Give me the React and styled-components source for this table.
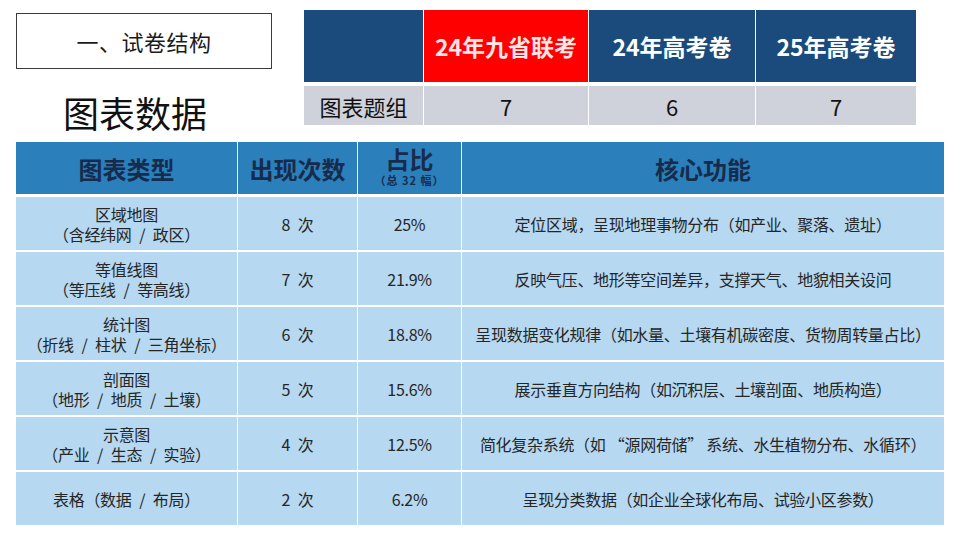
import React from 'react';
import styled, { createGlobalStyle } from 'styled-components';

const FONT = `"Noto Sans CJK SC", "Noto Sans", sans-serif`;

const summary = {
	columns: ['24年九省联考', '24年高考卷', '25年高考卷'],
	label: '图表题组',
	values: ['7', '6', '7'],
};

// \u2002 keeps the wide gaps round the slashes seen in the slide
const S = '\u2002/\u2002';

const rows = [
	{ type: ['区域地图', `（含经纬网${S}政区）`], count: '8\u2002次', ratio: '25%', use: '定位区域，呈现地理事物分布（如产业、聚落、遗址）' },
	{ type: ['等值线图', `（等压线${S}等高线）`], count: '7\u2002次', ratio: '21.9%', use: '反映气压、地形等空间差异，支撑天气、地貌相关设问' },
	{ type: ['统计图', `（折线${S}柱状${S}三角坐标）`], count: '6\u2002次', ratio: '18.8%', use: '呈现数据变化规律（如水量、土壤有机碳密度、货物周转量占比）' },
	{ type: ['剖面图', `（地形${S}地质${S}土壤）`], count: '5\u2002次', ratio: '15.6%', use: '展示垂直方向结构（如沉积层、土壤剖面、地质构造）' },
	{ type: ['示意图', `（产业${S}生态${S}实验）`], count: '4\u2002次', ratio: '12.5%', use: '简化复杂系统（如 “源网荷储” 系统、水生植物分布、水循环）' },
	{ type: [`表格（数据${S}布局）`], count: '2\u2002次', ratio: '6.2%', use: '呈现分类数据（如企业全球化布局、试验小区参数）' },
];

const GlobalStyle = createGlobalStyle`
	html, body {
		margin: 0;
		padding: 0;
		background: #ffffff;
		font-family: ${FONT};
	}
`;

const App = () => (
	<>
		<GlobalStyle />
		<Page>
			<Top>
				<LeftColumn>
					<SectionBox>一、试卷结构</SectionBox>
					<BigTitle>图表数据</BigTitle>
				</LeftColumn>
				<SummaryTable>
					<SummaryHead />
					{summary.columns.map((c, i) => (
						<SummaryHead key={c} $highlight={i === 0}>
							{c}
						</SummaryHead>
					))}
					<SummaryCell>{summary.label}</SummaryCell>
					{summary.values.map((v, i) => (
						<SummaryCell key={i}>{v}</SummaryCell>
					))}
				</SummaryTable>
			</Top>
			<MainTable>
				<HeadCell>图表类型</HeadCell>
				<HeadCell>出现次数</HeadCell>
				<HeadCell>
					<HeadStack>
						<HeadMain>占比</HeadMain>
						<HeadNote>（总 32 幅）</HeadNote>
					</HeadStack>
				</HeadCell>
				<HeadCell>核心功能</HeadCell>
				{rows.map(r => (
					<React.Fragment key={r.type[0]}>
						<BodyCell>
							<TypeStack>
								{r.type.map(t => (
									<TypeLine key={t}>{t}</TypeLine>
								))}
							</TypeStack>
						</BodyCell>
						<BodyCell>{r.count}</BodyCell>
						<BodyCell>{r.ratio}</BodyCell>
						<BodyCell $nowrap>{r.use}</BodyCell>
					</React.Fragment>
				))}
			</MainTable>
		</Page>
	</>
);

const Page = styled.div`
	width: 960px;
	height: 540px;
	box-sizing: border-box;
	padding: 10px 16px 0 16px;
	display: flex;
	flex-direction: column;
	gap: 12px;
`;

const Top = styled.div`
	display: flex;
	align-items: flex-start;
	gap: 32px;
`;

const LeftColumn = styled.div`
	width: 256px;
	display: flex;
	flex-direction: column;
`;

const SectionBox = styled.div`
	margin-top: 3px;
	height: 56px;
	box-sizing: border-box;
	border: 1px solid #3a3a3a;
	display: flex;
	align-items: center;
	justify-content: center;
	font-size: 22px;
	color: #1a1a1a;
	letter-spacing: 0.5px;
`;

const BigTitle = styled.div`
	margin-top: 25px;
	padding-left: 47px;
	font-size: 36px;
	line-height: 36px;
	color: #111111;
`;

const SummaryTable = styled.div`
	width: 613px;
	display: grid;
	grid-template-columns: 119px 164px 166px 160px;
	grid-template-rows: 72px 39px;
	column-gap: 1px;
	row-gap: 4px;
	background: #ffffff;
`;

const SummaryHead = styled.div`
	background: ${p => (p.$highlight ? '#fe0000' : '#1a4b7c')};
	color: ${p => (p.$highlight ? '#ffe6e6' : '#ffffff')};
	font-weight: 700;
	font-size: 23px;
	display: flex;
	align-items: center;
	justify-content: center;
`;

const SummaryCell = styled.div`
	background: #cfd1db;
	color: #111111;
	font-size: 22px;
	display: flex;
	align-items: center;
	justify-content: center;
`;

const MainTable = styled.div`
	width: 928px;
	display: grid;
	grid-template-columns: 221px 119px 103px 482px;
	grid-template-rows: 53px repeat(6, 53px);
	column-gap: 1px;
	row-gap: 2px;
	background: #ffffff;

	& > :nth-child(-n + 4) {
		margin-bottom: 1px;
	}
`;

const HeadCell = styled.div`
	background: #2b7fbb;
	color: #172c4c;
	font-weight: 700;
	font-size: 24px;
	display: flex;
	align-items: center;
	justify-content: center;
`;

const HeadStack = styled.div`
	display: flex;
	flex-direction: column;
	align-items: center;
`;

const HeadMain = styled.span`
	line-height: 28px;
	margin-top: -4px;
`;

const HeadNote = styled.span`
	font-size: 11px;
	line-height: 14px;
	letter-spacing: 1px;
`;

const BodyCell = styled.div`
	background: #b6d8f0;
	color: #262626;
	font-size: 16px;
	display: flex;
	align-items: center;
	justify-content: center;
	text-align: center;
	white-space: ${p => (p.$nowrap ? 'nowrap' : 'normal')};
	overflow: hidden;
	letter-spacing: -0.3px;
`;

const TypeStack = styled.div`
	display: flex;
	flex-direction: column;
	align-items: center;
`;

const TypeLine = styled.span`
	line-height: 20px;
	white-space: nowrap;
`;

export default App;
